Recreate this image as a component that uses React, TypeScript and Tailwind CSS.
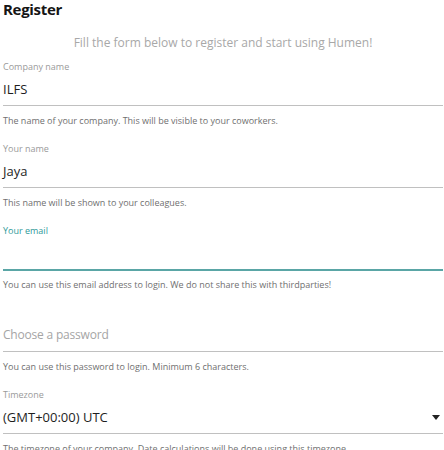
import React from "react";

type FieldProps = {
  label?: string;
  value?: string;
  placeholder?: string;
  help: string;
  focused?: boolean;
  select?: boolean;
};

function Field({ label, value, placeholder, help, focused, select }: FieldProps) {
  return (
    <div className="flex flex-col">
      <div
        className={
          "h-[20px] leading-[20px] text-[9px] " +
          (focused ? "text-[#2f9a9a]" : "text-[#9a9a9a]")
        }
      >
        {label ?? ""}
      </div>
      <div className="h-[28px] flex items-start justify-between">
        <span
          className={
            "leading-[24px] " +
            (value
              ? "text-[13px] text-[#1e1e1e]"
              : "text-[12px] tracking-[-0.2px] text-[#a5a5a5]")
          }
        >
          {value ?? placeholder ?? ""}
        </span>
        {select && (
          <svg width="8" height="5" viewBox="0 0 8 5" className="mt-[10px] mr-[3px]">
            <path d="M0 0 L8 0 L4 5 Z" fill="#222" />
          </svg>
        )}
      </div>
      <div className={focused ? "h-[2px] bg-[#5aa6a6]" : "h-[1px] bg-[#c0c0c0] mb-[1px]"} />
      <div className="h-[32px] pt-[4px] leading-[20px] text-[9px] text-[#6f6f6f] whitespace-nowrap">
        {help}
      </div>
    </div>
  );
}

export default function App() {
  return (
    <div
      className="w-[444px] h-[450px] overflow-hidden bg-white pl-[3px] pr-[1px]"
      style={{ fontFamily: '"Open Sans", "Noto Sans", sans-serif' }}
    >
      <h1 className="h-[22px] leading-[19px] text-[15px] tracking-[-0.3px] font-bold text-[#151515]">
        Register
      </h1>
      <p className="h-[35px] pt-[12px] leading-[18px] text-center text-[12px] text-[#a8a8a8]">
        Fill the form below to register and start using Humen!
      </p>
      <Field
        label="Company name"
        value="ILFS"
        help="The name of your company. This will be visible to your coworkers."
      />
      <Field label="Your name" value="Jaya" help="This name will be shown to your colleagues." />
      <Field
        label="Your email"
        focused
        help="You can use this email address to login. We do not share this with thirdparties!"
      />
      <Field
        placeholder="Choose a password"
        help="You can use this password to login. Minimum 6 characters."
      />
      <Field
        label="Timezone"
        value="(GMT+00:00) UTC"
        select
        help="The timezone of your company. Date calculations will be done using this timezone."
      />
    </div>
  );
}
